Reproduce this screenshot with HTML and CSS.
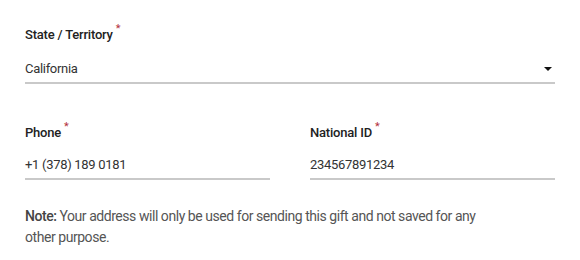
FILE: index.html
```html
<!DOCTYPE html>
<html lang="en">
<head>
    <meta charset="UTF-8">
    <meta name="viewport" content="width=device-width, initial-scale=1.0">
    <title>Shipping Details</title>
    <link rel="stylesheet" href="styles.css">
</head>
<body>
    <form class="address-form">
        <div class="form-group state-group">
            <label class="field-label" for="state">State / Territory<span class="req">*</span></label>
            <div class="select-field" id="state">
                <span class="field-value">California</span>
                <svg class="drop-arrow" width="8" height="4" viewBox="0 0 8 4"><polygon points="0,0 8,0 4,4" fill="#111"/></svg>
            </div>
        </div>

        <div class="form-row">
            <div class="form-group">
                <label class="field-label" for="phone">Phone<span class="req">*</span></label>
                <div class="text-field" id="phone"><span class="field-value">+1 (378) 189 0181</span></div>
            </div>
            <div class="form-group">
                <label class="field-label" for="nationalId">National ID<span class="req">*</span></label>
                <div class="text-field" id="nationalId"><span class="field-value">234567891234</span></div>
            </div>
        </div>

        <p class="note"><strong>Note:</strong> Your address will only be used for sending this gift and not saved for any other purpose.</p>
    </form>
</body>
</html>
```

FILE: styles.css
```css
body {
    margin: 0;
    padding: 27px 25px 0;
    font-family: Roboto, "Noto Sans", Arial, sans-serif;
    background-color: #fff;
    color: #333;
}
.address-form {
    width: 530px;
}
.form-group {
    display: flex;
    flex-direction: column;
}
.field-label {
    font-size: 13px;
    line-height: 16px;
    font-weight: 500;
    letter-spacing: -0.2px;
    color: #222;
}
.req {
    color: #b3303d;
    font-size: 11px;
    font-weight: 400;
    position: relative;
    top: -7px;
    margin-left: 3px;
}
.field-value {
    font-size: 13px;
    line-height: 16px;
    letter-spacing: -0.3px;
    color: #333;
}
.select-field {
    display: flex;
    justify-content: space-between;
    align-items: center;
    margin-top: 17px;
    padding: 0 3px 5px 0;
    border-bottom: 2px solid #c9c9c9;
}
.text-field {
    margin-top: 12px;
    padding-bottom: 5px;
    border-bottom: 2px solid #c9c9c9;
}
.form-row {
    display: grid;
    grid-template-columns: 1fr 1fr;
    column-gap: 40px;
    margin-top: 41px;
}
.note {
    max-width: 470px;
    margin: 26px 0 0;
    font-size: 14px;
    line-height: 21px;
    letter-spacing: -0.45px;
    color: #555;
}
.note strong {
    color: #444;
    font-weight: 500;
}
```
